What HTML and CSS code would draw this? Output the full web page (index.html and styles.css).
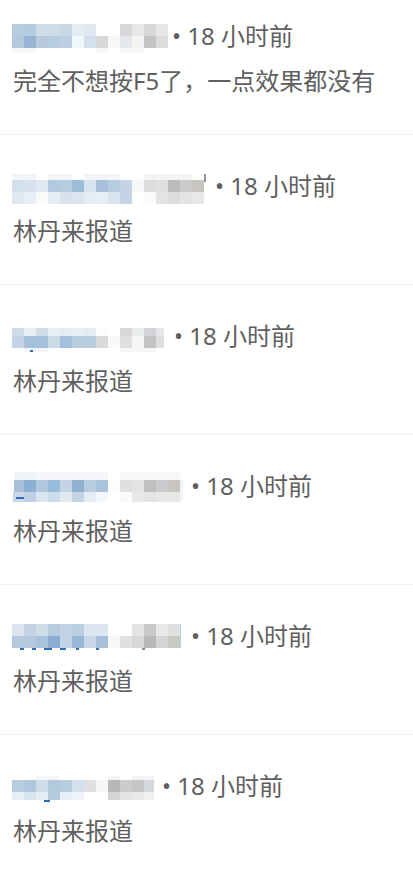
FILE: index.html
```html
<!DOCTYPE html>
<html lang="zh-CN">
<head>
<meta charset="utf-8">
<title>评论</title>
<link rel="stylesheet" href="styles.css">
</head>
<body>
<ul class="comments">
  <li class="comment first">
    <div class="head">
      <svg class="mosaic" width="156" height="36" viewBox="0 0 156 36" shape-rendering="crispEdges">
        <g transform="translate(0,4)">
          <rect x="0" width="12" height="12" fill="#b8cce0"/><rect x="12" width="12" height="12" fill="#b4cce0"/><rect x="24" width="12" height="12" fill="#d0dce8"/><rect x="36" width="12" height="12" fill="#d0dce8"/><rect x="48" width="12" height="12" fill="#cad8e6"/><rect x="60" width="12" height="12" fill="#e4ecf4"/><rect x="72" width="12" height="12" fill="#e0e8f2"/><rect x="108" width="12" height="12" fill="#d8d8d8"/><rect x="120" width="12" height="12" fill="#e8e8e8"/><rect x="132" width="12" height="12" fill="#d8d8d8"/><rect x="144" width="12" height="12" fill="#e6e6e6"/>
        </g>
        <g transform="translate(0,16)">
          <rect x="0" width="12" height="12" fill="#b4c8de"/><rect x="12" width="12" height="12" fill="#98b4d4"/><rect x="24" width="12" height="12" fill="#b8cadc"/><rect x="36" width="12" height="12" fill="#b8cce0"/><rect x="48" width="12" height="12" fill="#bcd0e2"/><rect x="60" width="12" height="12" fill="#f0f8fc"/><rect x="72" width="12" height="12" fill="#d4e0ee"/><rect x="84" width="12" height="12" fill="#d8d8d8"/><rect x="96" width="12" height="12" fill="#f8f8f6"/><rect x="108" width="12" height="12" fill="#e4e8ec"/><rect x="120" width="12" height="12" fill="#f4f4f2"/><rect x="132" width="12" height="12" fill="#c4c4c6"/><rect x="144" width="12" height="12" fill="#dcdcdc"/>
        </g>
        <g transform="translate(0,28)">
          <rect x="0" width="24" height="5" fill="#f4f6fa"/><rect x="84" width="12" height="5" fill="#f6f6f6"/><rect x="108" width="24" height="5" fill="#f6f6f6"/>
        </g>
      </svg>
      <span class="meta">• 18 小时前</span>
    </div>
    <p class="text">完全不想按F5了，一点效果都没有</p>
  </li>
  <li class="comment">
    <div class="head">
      <svg class="mosaic" width="199" height="36" viewBox="0 0 199 36" shape-rendering="crispEdges">
        <g transform="translate(0,4)">
          <rect x="0" width="24" height="6" fill="#f2f5f9"/><rect x="36" width="24" height="6" fill="#f2f5f9"/><rect x="72" width="36" height="6" fill="#f2f5f9"/><rect x="132" width="48" height="6" fill="#f4f4f4"/>
          <rect x="192" y="0" width="2" height="8" fill="#8c97a6"/>
        </g>
        <g transform="translate(0,10)">
          <rect x="0" width="12" height="12" fill="#d4e0ec"/><rect x="12" width="12" height="12" fill="#d8e2ee"/><rect x="24" width="12" height="12" fill="#e0e8f2"/><rect x="36" width="12" height="12" fill="#b4c8e0"/><rect x="48" width="12" height="12" fill="#b8cce0"/><rect x="60" width="12" height="12" fill="#9cbcd8"/><rect x="72" width="12" height="12" fill="#d8e4f0"/><rect x="84" width="12" height="12" fill="#a8c0da"/><rect x="96" width="12" height="12" fill="#b8cce0"/><rect x="108" width="12" height="12" fill="#c4d4e6"/><rect x="120" width="12" height="12" fill="#f8f8f8"/><rect x="132" width="12" height="12" fill="#dcdcdc"/><rect x="144" width="12" height="12" fill="#e0e0e0"/><rect x="156" width="12" height="12" fill="#bcbcbc"/><rect x="168" width="12" height="12" fill="#cccccc"/><rect x="180" width="12" height="12" fill="#c8c4c0"/>
        </g>
        <g transform="translate(0,22)">
          <rect x="0" width="12" height="12" fill="#e0e8f2"/><rect x="12" width="12" height="12" fill="#e8eef6"/><rect x="24" width="12" height="12" fill="#f8fafc"/><rect x="36" width="12" height="12" fill="#e4ecf4"/><rect x="48" width="12" height="12" fill="#d8e2ec"/><rect x="60" width="12" height="12" fill="#dce6f0"/><rect x="72" width="12" height="12" fill="#e4ecf4"/><rect x="84" width="12" height="12" fill="#e8eef6"/><rect x="96" width="12" height="12" fill="#d8e4f0"/><rect x="108" width="12" height="12" fill="#c4d4e6"/><rect x="132" width="12" height="12" fill="#fafafa"/><rect x="144" width="12" height="12" fill="#e4e4e4"/><rect x="156" width="12" height="12" fill="#dcdcdc"/><rect x="168" width="12" height="12" fill="#e4e4e4"/><rect x="180" width="12" height="12" fill="#e8e8e8"/>
        </g>
      </svg>
      <span class="meta">• 18 小时前</span>
    </div>
    <p class="text">林丹来报道</p>
  </li>
  <li class="comment">
    <div class="head">
      <svg class="mosaic" width="158" height="36" viewBox="0 0 158 36" shape-rendering="crispEdges">
        <g transform="translate(0,8)">
          <rect x="0" width="12" height="8" fill="#d0dce8"/><rect x="12" width="12" height="8" fill="#e8eef6"/><rect x="24" width="12" height="8" fill="#d0dce8"/><rect x="36" width="12" height="8" fill="#e8eef6"/><rect x="48" width="12" height="8" fill="#e4ecf4"/><rect x="60" width="12" height="8" fill="#e8eef6"/><rect x="72" width="12" height="8" fill="#e4ecf4"/><rect x="84" width="12" height="8" fill="#fcfcfc"/><rect x="108" width="12" height="8" fill="#d8d8d8"/><rect x="120" width="12" height="8" fill="#e8ecec"/><rect x="132" width="12" height="8" fill="#d4d4d8"/><rect x="144" width="8" height="8" fill="#e4e8ea"/>
        </g>
        <g transform="translate(0,16)">
          <rect x="0" width="12" height="12" fill="#c4d4e6"/><rect x="12" width="12" height="12" fill="#a4c0dc"/><rect x="24" width="12" height="12" fill="#a4c0dc"/><rect x="36" width="12" height="12" fill="#ccdae8"/><rect x="48" width="12" height="12" fill="#a4c0dc"/><rect x="60" width="12" height="12" fill="#b8cce0"/><rect x="72" width="12" height="12" fill="#b8cce0"/><rect x="84" width="12" height="12" fill="#dcdad8"/><rect x="96" width="12" height="12" fill="#f8fafa"/><rect x="108" width="12" height="12" fill="#e0e0e0"/><rect x="120" width="12" height="12" fill="#f6f6f4"/><rect x="132" width="12" height="12" fill="#c4c2c4"/><rect x="144" width="8" height="12" fill="#dce0e0"/>
        </g>
        <g transform="translate(0,28)">
          <rect x="12" width="24" height="4" fill="#f2f5f9"/><rect x="108" width="36" height="4" fill="#f6f6f6"/>
          <rect x="18" y="2" width="3" height="2" fill="#2a6ab8"/>
        </g>
      </svg>
      <span class="meta">• 18 小时前</span>
    </div>
    <p class="text">林丹来报道</p>
  </li>
  <li class="comment">
    <div class="head">
      <svg class="mosaic" width="175" height="36" viewBox="0 0 175 36" shape-rendering="crispEdges">
        <g transform="translate(0,2)">
          <rect x="2" width="22" height="8" fill="#f0f4f8"/><rect x="24" width="72" height="8" fill="#f4f6fa"/><rect x="108" width="60" height="8" fill="#f8f8f8"/>
        </g>
        <g transform="translate(0,10)">
          <rect x="2" width="10" height="12" fill="#a8c0da"/><rect x="12" width="12" height="12" fill="#8cb0d4"/><rect x="24" width="12" height="12" fill="#b0c8de"/><rect x="36" width="12" height="12" fill="#98bcdc"/><rect x="48" width="12" height="12" fill="#c4d4e6"/><rect x="60" width="12" height="12" fill="#90b0d0"/><rect x="72" width="12" height="12" fill="#b8cce0"/><rect x="84" width="12" height="12" fill="#a8c4dc"/><rect x="96" width="12" height="12" fill="#fcfcfc"/><rect x="108" width="12" height="12" fill="#e0e0e0"/><rect x="120" width="12" height="12" fill="#e4e4e2"/><rect x="132" width="12" height="12" fill="#c0c0c0"/><rect x="144" width="12" height="12" fill="#ccccd0"/><rect x="156" width="12" height="12" fill="#c8c4c0"/><rect x="168" width="3" height="20" fill="#f0f4f8"/>
        </g>
        <g transform="translate(0,22)">
          <rect x="1" width="11" height="10" fill="#c8d8e8"/><rect x="12" width="12" height="10" fill="#c0d0e4"/><rect x="24" width="12" height="10" fill="#dce6f0"/><rect x="36" width="12" height="10" fill="#ccdcec"/><rect x="48" width="12" height="10" fill="#e0e8f0"/><rect x="60" width="12" height="10" fill="#c4d4e4"/><rect x="72" width="12" height="10" fill="#e4ecf4"/><rect x="84" width="12" height="10" fill="#f4f8fa"/><rect x="108" width="12" height="10" fill="#fafafa"/><rect x="120" width="12" height="10" fill="#e8e8e8"/><rect x="132" width="12" height="10" fill="#e4e4e4"/><rect x="144" width="12" height="10" fill="#e8e8e8"/><rect x="156" width="12" height="10" fill="#e8e8e8"/>
          <rect x="4" y="5" width="8" height="2" fill="#2a6ab8"/>
        </g>
      </svg>
      <span class="meta">• 18 小时前</span>
    </div>
    <p class="text">林丹来报道</p>
  </li>
  <li class="comment">
    <div class="head">
      <svg class="mosaic" width="175" height="36" viewBox="0 0 175 36" shape-rendering="crispEdges">
        <g transform="translate(0,4)">
          <rect x="0" width="12" height="12" fill="#dce6f0"/><rect x="12" width="12" height="12" fill="#c4d4e4"/><rect x="24" width="12" height="12" fill="#d0dee8"/><rect x="36" width="12" height="12" fill="#b8cce0"/><rect x="48" width="12" height="12" fill="#c0d4e6"/><rect x="60" width="12" height="12" fill="#bcd0e4"/><rect x="72" width="12" height="12" fill="#dce6f0"/><rect x="84" width="12" height="12" fill="#dce6f0"/><rect x="120" width="12" height="12" fill="#e4e4e2"/><rect x="132" width="12" height="12" fill="#c8c8c8"/><rect x="144" width="12" height="12" fill="#e8e8e6"/><rect x="156" width="12" height="12" fill="#e0e0de"/><rect x="168" width="1" height="24" fill="#b8cce6"/>
        </g>
        <g transform="translate(0,16)">
          <rect x="0" width="12" height="12" fill="#b4c8de"/><rect x="12" width="12" height="12" fill="#b4c8de"/><rect x="24" width="12" height="12" fill="#a8c4dc"/><rect x="36" width="12" height="12" fill="#8cacd0"/><rect x="48" width="12" height="12" fill="#c0d4e6"/><rect x="60" width="12" height="12" fill="#98b8d8"/><rect x="72" width="12" height="12" fill="#c8d8e8"/><rect x="84" width="12" height="12" fill="#a8c0da"/><rect x="96" width="12" height="12" fill="#f8f8f8"/><rect x="108" width="12" height="12" fill="#e0e0e0"/><rect x="120" width="12" height="12" fill="#d8d8d6"/><rect x="132" width="12" height="12" fill="#b8b8b8"/><rect x="144" width="12" height="12" fill="#d4d4d4"/><rect x="156" width="12" height="12" fill="#c8c8c4"/>
        </g>
        <g transform="translate(0,28)" fill="#2f6fc0">
          <rect x="8" width="4" height="2"/><rect x="20" width="4" height="2"/><rect x="32" width="8" height="2"/><rect x="48" width="6" height="2"/><rect x="64" width="3" height="2"/><rect x="84" width="3" height="2"/>
          <rect x="130" width="3" height="2" fill="#8a8a8a"/>
        </g>
      </svg>
      <span class="meta">• 18 小时前</span>
    </div>
    <p class="text">林丹来报道</p>
  </li>
  <li class="comment">
    <div class="head">
      <svg class="mosaic" width="146" height="36" viewBox="0 0 146 36" shape-rendering="crispEdges">
        <g transform="translate(0,6)">
          <rect x="24" width="24" height="4" fill="#f4f6f8"/><rect x="96" width="12" height="4" fill="#f4f4f4"/><rect x="120" width="22" height="4" fill="#f4f4f4"/>
        </g>
        <g transform="translate(0,10)">
          <rect x="0" width="12" height="12" fill="#b8cce0"/><rect x="12" width="12" height="12" fill="#b0c8de"/><rect x="24" width="12" height="12" fill="#d0dce8"/><rect x="36" width="12" height="12" fill="#b4c8de"/><rect x="48" width="12" height="12" fill="#b8cce0"/><rect x="60" width="12" height="12" fill="#d4e0ec"/><rect x="72" width="12" height="12" fill="#e0e0e0"/><rect x="84" width="12" height="12" fill="#f6f6f6"/><rect x="96" width="12" height="12" fill="#b8b8b8"/><rect x="108" width="12" height="12" fill="#cccccc"/><rect x="120" width="12" height="12" fill="#c8c6c4"/><rect x="132" width="10" height="12" fill="#d4d8dc"/>
        </g>
        <g transform="translate(0,22)">
          <rect x="0" width="12" height="8" fill="#e8eef6"/><rect x="12" width="12" height="8" fill="#d8e4f0"/><rect x="24" width="12" height="8" fill="#e4ecf4"/><rect x="36" width="12" height="8" fill="#b4c8de"/><rect x="48" width="12" height="8" fill="#e8eef6"/><rect x="60" width="12" height="8" fill="#f0f4fa"/><rect x="96" width="12" height="8" fill="#d4d4d4"/><rect x="108" width="12" height="8" fill="#e4e4e4"/><rect x="120" width="12" height="8" fill="#e8e8e8"/><rect x="132" width="10" height="8" fill="#f0f0f0"/>
          <rect x="32" y="8" width="6" height="2" fill="#2a6ab8"/>
        </g>
      </svg>
      <span class="meta">• 18 小时前</span>
    </div>
    <p class="text">林丹来报道</p>
  </li>
</ul>
</body>
</html>
```

FILE: styles.css
```css
html, body {
  margin: 0;
  padding: 0;
  background: #ffffff;
}

body {
  font-family: "Noto Sans", "Noto Sans CJK SC", sans-serif;
  font-size: 24px;
  color: #606060;
}

.comments {
  list-style: none;
  margin: 0;
  padding: 0;
}

.comment {
  padding: 35px 12px 37px 12px;
  border-bottom: 1px solid #f0f0f0;
}

.comment.first {
  padding-top: 20px;
}

.head {
  display: flex;
  align-items: flex-start;
  height: 32px;
  line-height: 32px;
  white-space: nowrap;
}

.mosaic {
  display: block;
  flex: none;
}

.meta {
  display: block;
  margin-left: 4px;
  line-height: 32px;
}

.text {
  margin: 13px 0 0 0;
  line-height: 32px;
  padding-left: 1px;
}
```
